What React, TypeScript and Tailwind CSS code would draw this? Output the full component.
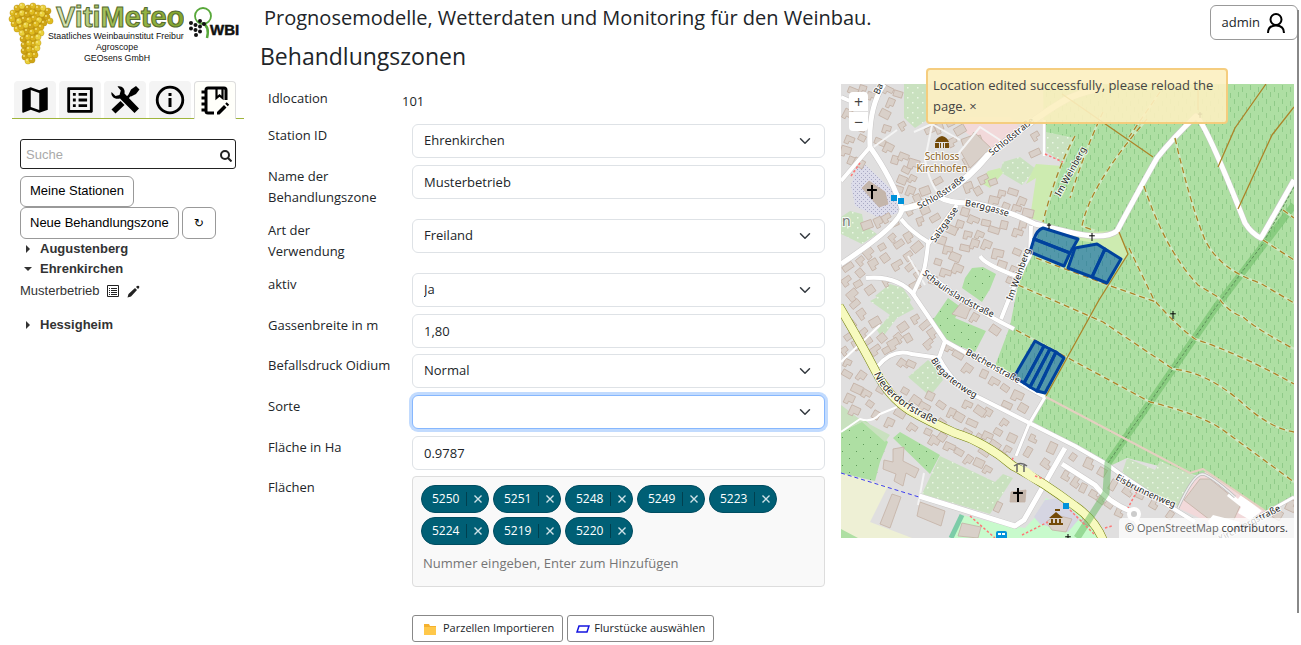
import React, { useState } from 'react';
import { MdMap, MdListAlt } from 'react-icons/md';

type Point = [number, number];

const tabs = ['Karte', 'Liste', 'Werkzeuge', 'Info', 'Behandlungszonen'];

const initialParcels = ['5250', '5251', '5248', '5249', '5223', '5224', '5219', '5220'];

// ---------------------------------------------------------------- icons

const ToolsIcon = () => (
  <svg viewBox="0 0 32 32" className="h-8 w-8">
    <path d="M8.500 2.500 C13 1.500 16.500 5 15.500 9.500 L30 24.500 L25.500 29 L11 14.500 C6 16 1.500 12.500 2.500 8 L6.500 12 L10.500 11 L11.800 6.500 Z" />
    <path d="M19.500 10.500 L22 5.500 L27 2 L30.500 5.500 L27 10 L22 12.500 Z" />
    <path d="M22 10 L17.500 14.500" stroke="#000" strokeWidth="2.500" />
    <path d="M11.500 17 L15.500 21 L6.500 29.500 L2.500 25.500 Z" />
  </svg>
);

const InfoIcon = () => (
  <svg viewBox="0 0 32 32" className="h-8 w-8" fill="none" stroke="#000" strokeWidth="2.800">
    <circle cx="16" cy="16" r="12.800" />
    <path d="M16 14 V23 M16 9 V12" strokeWidth="3" />
  </svg>
);

const NotebookIcon = () => (
  <svg viewBox="0 0 32 32" className="h-8 w-8">
    <g fill="none" stroke="#000" strokeWidth="3">
      <path d="M27 15 V5 Q27 3 25 3 H9 Q7 3 7 5 V26 Q7 28 9 28 H15" />
      <path d="M17.500 3 V13 L20.500 10.500 L23.500 13 V3" strokeWidth="2.200" />
      <path d="M2.500 7 H8 M2.500 13 H8 M2.500 19 H8 M2.500 25 H8" strokeWidth="3.200" />
    </g>
    <path d="M18 27 L25 20 L27.500 22.500 L20.500 29.500 H18 Z M26.200 18.800 L27.700 17.300 L30.200 19.800 L28.700 21.300 Z" />
  </svg>
);

const ListIcon = () => (
  <svg viewBox="0 0 12 12" className="h-3 w-3">
    <path d="M.5 .5 H11.500 V11.500 H.5 Z" fill="#fff" stroke="#222" />
    <path d="M2 3.500 H3 M4 3.500 H10 M2 5.500 H3 M4 5.500 H10 M2 7.500 H3 M4 7.500 H10 M2 9.500 H3 M4 9.500 H10" stroke="#222" />
  </svg>
);

const PencilIcon = () => (
  <svg viewBox="0 0 13 13" className="h-[13px] w-[13px]">
    <path d="M.5 12.500 L1.500 9 L8 3 L10 5 L4 11.500 Z M9 2 L10 1 Q11 .3 12 1 Q12.700 2 12 3 L11 4 Z" fill="#222" />
  </svg>
);

const UserIcon = () => (
  <svg viewBox="0 0 20 22" className="h-[22px] w-5" fill="none" stroke="#000" strokeWidth="2">
    <circle cx="10" cy="7.500" r="5.500" />
    <path d="M2 21 C2 16 5 13.500 10 13.500 C15 13.500 18 16 18 21" />
  </svg>
);

const Triangle = ({ open }: { open: boolean }) => (
  <svg viewBox="0 0 8 8" className="h-2 w-2">
    <path d={open ? 'M0 2 H8 L4 6 Z' : 'M2 0 L6 4 L2 8 Z'} fill="#333" />
  </svg>
);

// ---------------------------------------------------------------- logo

const grapes: Point[] = [
  [13, 13], [17, 8], [22, 6], [28, 8], [33, 6], [38, 8], [43, 8], [48, 11], [12, 19], [17, 15], [22, 13], [27, 14],
  [32, 12], [37, 14], [42, 14], [47, 17], [50, 21], [14, 24], [19, 21], [24, 19], [29, 20], [34, 18], [39, 20], [44, 23],
  [17, 29], [21, 27], [26, 25], [31, 26], [36, 24], [41, 27], [22, 33], [27, 31], [32, 32], [37, 30], [41, 33],
  [23, 39], [28, 37], [33, 38], [38, 37], [24, 45], [29, 43], [34, 44], [38, 43], [24, 51], [29, 49], [34, 50],
  [37, 48], [25, 57], [30, 55], [35, 55], [28, 61], [32, 60],
];

const Logo = () => (
  <svg viewBox="0 0 244 68" className="block h-[68px] w-[244px]">
    <defs>
      <linearGradient id="brand" x1="0" x2="1">
        <stop offset="0" stopColor="#dfe8c4" />
        <stop offset="0.4" stopColor="#a3bf55" />
        <stop offset="1" stopColor="#83a52c" />
      </linearGradient>
      <clipPath id="brandClip">
        <rect x="0" y="0" width="184" height="68" />
      </clipPath>
    </defs>
    <path d="M14 11 L22 6 L42 6 L49 14 L45 24 L39 35 L37 54 L31 62 L25 57 L23 34 L15 24 Z" fill="#c0940f" />
    {grapes.map(([x, y], i) => (
      <g key={i}>
        <circle cx={x} cy={y} r="3.100" fill={['#e0bc1f', '#cfa516', '#ead03a', '#d9b01a'][(i * 7) % 4]} stroke="#b58d12" strokeWidth=".4" />
        <circle cx={x - 1} cy={y - 1} r=".9" fill="#f6e68a" />
      </g>
    ))}
    <g clipPath="url(#brandClip)" fontFamily="Liberation Sans, sans-serif">
      <text x="56" y="27" fontSize="29" fontWeight="700" fill="url(#brand)" stroke="#556b30" strokeWidth="1">VitiMeteo</text>
      <g fontSize="8.800" fill="#111">
        <text x="48" y="39">Staatliches Weinbauinstitut Freiburg</text>
        <text x="117" y="50" textAnchor="middle">Agroscope</text>
        <text x="117" y="61" textAnchor="middle">GEOsens GmbH</text>
      </g>
    </g>
    <g fill="none" stroke="#58a83a">
      <circle cx="203" cy="16" r="8" strokeWidth="1.800" />
      <path d="M202 23 Q210 26 207 38" strokeWidth="2.500" />
    </g>
    <g fill="#111">
      {[[191, 23], [200, 21], [195.500, 25], [191, 28.500], [200, 26.500], [195.500, 30], [204, 24], [200, 31.500], [196, 35]].map(([x, y]) => (
        <circle key={`${x}-${y}`} cx={x} cy={y} r="2" />
      ))}
      <text x="210" y="35" fontSize="15" fontWeight="700" stroke="#111" strokeWidth=".5" fontFamily="Liberation Sans, sans-serif">WBI</text>
    </g>
  </svg>
);

// ---------------------------------------------------------------- map

// houses grouped by the direction of the street they stand on
const houses: { angle: number; spots: Point[] }[] = [
  {
    angle: 22,
    spots: [
      [863, 88], [853, 91], [848, 113], [860, 127], [850, 139], [862, 138], [846, 150], [852, 161], [888, 89], [898, 94],
      [891, 102], [885, 114], [887, 128], [880, 142], [889, 147], [895, 160], [904, 156], [906, 170], [914, 163],
      [902, 180], [913, 178], [898, 189], [911, 190], [859, 163], [872, 95],
    ],
  },
  {
    angle: -25,
    spots: [
      [902, 125], [930, 130], [939, 127], [960, 130], [952, 141], [978, 139], [968, 160], [950, 122], [967, 140],
      [938, 181], [917, 198], [925, 191], [1035, 135], [1035, 153], [968, 186], [978, 191], [983, 178], [993, 182],
      [910, 208], [925, 210], [920, 220], [935, 218], [878, 221], [867, 225], [886, 217], [895, 223],
    ],
  },
  {
    angle: 18,
    spots: [
      [1002, 193], [1013, 192], [1022, 201], [1028, 213], [1017, 208], [1006, 206], [994, 200], [965, 212], [974, 219],
      [986, 223], [960, 224], [952, 230], [968, 234], [994, 230], [987, 244], [1004, 225], [1018, 232], [1017, 252],
      [998, 253], [1002, 265], [1014, 269], [965, 248], [975, 243], [955, 257], [948, 249], [938, 262], [958, 268],
      [933, 280], [946, 272], [1011, 281], [1023, 224], [941, 240], [980, 234],
    ],
  },
  {
    angle: -35,
    spots: [
      [892, 237], [899, 244], [908, 236], [917, 247], [908, 255], [882, 247], [868, 252], [885, 258], [897, 264],
      [910, 267], [918, 275], [915, 286], [860, 260], [848, 267], [873, 263], [860, 273], [846, 280], [858, 284],
      [852, 294], [870, 290], [886, 281], [855, 304], [861, 313], [875, 322], [863, 332], [848, 337], [857, 343],
      [882, 338], [875, 349], [887, 350], [898, 337], [903, 327], [915, 318], [925, 325], [932, 332], [908, 338],
      [928, 343], [868, 341], [893, 343], [851, 325], [844, 350],
    ],
  },
  {
    angle: 30,
    spots: [
      [848, 362], [847, 374], [862, 375], [857, 389], [867, 393], [870, 404], [855, 410], [881, 389], [904, 363],
      [911, 364], [975, 317], [995, 330], [950, 347], [958, 355], [968, 368], [984, 374], [995, 381], [1005, 388],
      [1018, 395], [1023, 408], [1005, 422], [1007, 405], [988, 412], [980, 411], [968, 404], [905, 391], [916, 400],
      [930, 396], [925, 406], [941, 405], [952, 412], [959, 417], [942, 422], [972, 423], [967, 433], [979, 438],
      [988, 435], [998, 432], [995, 445], [1012, 438], [1008, 449], [1002, 455], [890, 422], [900, 413], [913, 427],
      [928, 432], [935, 440], [942, 437], [950, 446], [959, 452], [969, 459], [979, 463], [988, 469], [984, 452],
      [850, 398], [876, 415], [973, 306], [960, 312],
    ],
  },
  {
    angle: -60,
    spots: [
      [1032, 438], [1028, 452], [1045, 463], [1052, 448], [1065, 475], [1073, 457], [1088, 463], [1102, 472],
      [1075, 481], [1083, 488], [1093, 494], [1110, 503], [1118, 512], [1113, 485], [1127, 490], [1140, 495],
      [1153, 503], [1170, 515], [1290, 505], [1278, 515], [1100, 499], [998, 507], [1086, 520],
    ],
  },
];

const roads: { d: string; w: number }[] = [
  { d: 'M884 84 Q868 108 870 147 Q893 180 902 209 Q901 224 841 264', w: 5 },
  { d: 'M841 181 L870 147 M841 97 L850 101', w: 4 },
  { d: 'M902 209 Q950 201 988 155 Q1035 118 1060 103 Q1075 93 1103 88', w: 6 },
  { d: 'M937 196 Q950 204 974 203 Q1010 211 1035 224 L1073 233 Q1105 240 1117 231 Q1141 186 1157 158 Q1172 139 1196 116 Q1206 124 1245 223 Q1252 234 1261 238 L1294 180', w: 5 },
  { d: 'M957 205 L928 244 Q926 262 924 270 Q960 302 1014 329', w: 4 },
  { d: 'M901 219 Q910 231 928 242 M924 270 L913 294 L945 341 L1045 397', w: 4 },
  { d: 'M866 278 Q898 275 915 296 M980 256 Q984 264 1016 276 M1031 226 L1030 255 Q1014 284 1001 319', w: 4 },
  { d: 'M878 366 Q893 348 912 354 L939 358 L945 341 M939 358 Q955 388 980 398 L1075 446 L1108 465 Q1130 482 1195 522', w: 4 },
  { d: 'M1045 397 L1029 424 L1016 456', w: 3 },
  { d: 'M919 496 L1015 526 L1024 520 L1065 448 M1062 464 L1095 485 Q1108 502 1130 511 L1144 532', w: 5 },
  { d: 'M1294 497 Q1255 519 1230 533 M1044 120 V156', w: 3 },
];

const footways = [
  'M1075 136 Q1056 170 1043 222 M1103 112 Q1085 150 1070 198',
  'M1147 119 Q1090 185 1082 226 L1095 231 M1160 92 L1129 137',
  'M1175 138 Q1190 203 1205 240 Q1220 270 1260 283 L1294 303',
  'M1144 186 Q1165 250 1198 285 L1218 297 Q1228 312 1243 317 Q1258 330 1294 349',
  'M1129 248 L1154 300 Q1178 327 1195 339 Q1240 354 1294 384',
  'M1018 285 L1103 322 L1173 369 Q1206 372 1240 401 Q1269 428 1294 432',
  'M1036 258 L1108 285 L1156 302',
  'M1016 330 L1150 402 Q1200 414 1223 430 L1294 482',
  'M1263 240 L1294 260 M1283 210 L1294 218',
];

const labels: { id: string; d: string; text: string; size: number }[] = [
  { id: 'l1', d: 'M919 209 Q948 196 970 175', text: 'Schloßstraße', size: 9 },
  { id: 'l2', d: 'M992 156 Q1010 142 1040 117', text: 'Schloßstraße', size: 9 },
  { id: 'l3', d: 'M965 206 Q985 208 1020 221', text: 'Berggasse', size: 9 },
  { id: 'l4', d: 'M935 243 L966 199', text: 'Salzgasse', size: 9 },
  { id: 'l5', d: 'M922 274 Q955 303 1004 322', text: 'Schauinslandstraße', size: 9 },
  { id: 'l6', d: 'M1060 197 L1092 139', text: 'Im Weinberg', size: 9 },
  { id: 'l7', d: 'M1012 301 Q1022 275 1034 239', text: 'Im Weinberg', size: 9 },
  { id: 'l8', d: 'M965 354 L1030 390', text: 'Belchenstraße', size: 9 },
  { id: 'l9', d: 'M931 360 Q942 382 984 403', text: 'Biegartenweg', size: 9 },
  { id: 'l10', d: 'M874 374 Q888 408 960 434', text: 'Niederdorfstraße', size: 10 },
  { id: 'l11', d: 'M1115 479 Q1145 498 1190 513', text: 'Eisbrunnenweg', size: 9 },
  { id: 'l12', d: 'M1221 542 Q1250 525 1298 502', text: 'Kirchbergstraße', size: 9 },
  { id: 'l13', d: 'M879 95 L890 70', text: 'Bachstraße', size: 9 },
];

const parcelShapes = [
  'M1043 228 L1078 239 L1070 253 L1034 239 Q1037 230 1043 228 Z',
  'M1034 239 L1070 253 L1064 266 L1030 252 Z',
  'M1075 248 L1097 244 L1105 249 L1092 277 L1068 268 Z',
  'M1105 249 L1121 259 L1107 283 L1092 277 Z',
  'M1035 341 L1044 346 L1024 383 L1014 377 Z',
  'M1044 346 L1050 349 L1030 387 L1024 383 Z',
  'M1050 349 L1056 352 L1037 391 L1030 387 Z',
  'M1056 352 L1064 358 L1045 393 L1037 391 Z',
];

const crosses: { x: number; y: number; s: number }[] = [
  { x: 872, y: 192, s: 7 },
  { x: 1018, y: 495, s: 7 },
  { x: 1049, y: 226, s: 3 },
  { x: 1092, y: 237, s: 4 },
  { x: 1173, y: 315, s: 4 },
  { x: 1200, y: 115, s: 3 },
  { x: 1068, y: 538, s: 4 },
];

const MapView = () => (
  <svg viewBox="841 84 453 454" className="block w-full bg-[#e0dfdf]" role="img" aria-label="Karte der Flächen">
    <defs>
      <pattern id="vines" width="16" height="14" patternUnits="userSpaceOnUse">
        <rect width="16" height="14" fill="#aedfa3" />
        <path d="M2.500 1 V6 M10.500 3 V8 M6.500 8 V13 M14.500 9 V14" stroke="#8fca88" />
      </pattern>
      <pattern id="orchard" width="10" height="10" patternUnits="userSpaceOnUse">
        <rect width="10" height="10" fill="#c9e1bf" />
        <path d="M2 2 h1.500 v1.500 h-1.500 Z M7 7 h1.500 v1.500 h-1.500 Z" fill="#ecf7e6" />
      </pattern>
      <pattern id="grass" width="14" height="14" patternUnits="userSpaceOnUse">
        <rect width="14" height="14" fill="#aedfa3" />
        <path d="M2 3 h1 v1 h-1 Z M9 10 h1 v1 h-1 Z" fill="#5f9a5a" />
      </pattern>
      <pattern id="yard" width="4" height="4" patternUnits="userSpaceOnUse">
        <rect width="4" height="4" fill="#dcdcea" />
        <path d="M1 1 h1 v1 h-1 Z M3 3 h1 v1 h-1 Z" fill="#a9a9c4" />
      </pattern>
      {labels.map((l) => (
        <path key={l.id} id={l.id} d={l.d} />
      ))}
    </defs>

    <rect x="841" y="84" width="453" height="454" fill="#e0dfdf" />

    {/* land use */}
    <path d="M1043 84 H1294 V497 L1266 511 L1210 475 L1195 475 L1127 458 L1110 466 L1033 422 L1045 397 L995 366 L1010 326 L1018 285 L1032 250 L1043 222 L1062 165 L1044 140 Z" fill="url(#vines)" />
    <path d="M904 84 H928 L930 118 L915 128 L904 118 Z" fill="url(#orchard)" />
    <path d="M1046 132 L1075 138 L1064 164 L1044 150 Z M1003 162 L1020 157 L1036 169 L1022 185 L1000 172 Z" fill="url(#orchard)" />
    <path d="M1036 164 L1062 166 L1043 222 L1030 218 L1036 178 L1026 184 Z M988 171 L1000 168 L1003 173 L990 188 L979 182 Z" fill="#cdebb0" />
    <path d="M1080 232 L1118 231 L1128 253 L1122 262 L1100 244 L1078 240 Z" fill="#cdebb0" />
    <path d="M960 128 L968 117 L1010 117 L1020 128 L985 158 L968 148 L972 137 Z" fill="#f2d9da" />
    <path d="M857 168 L862 162 L900 197 L898 213 L880 218 L855 206 L851 185 Z" fill="url(#yard)" />
    <path d="M841 217 L850 211 L862 214 L864 225 L877 234 L862 244 L841 234 Z" fill="url(#orchard)" />
    <path d="M965 278 L972 268 L983 267 L996 274 L990 289 L982 302 L962 288 Z" fill="url(#grass)" />
    <path d="M935 317 L948 298 L962 308 L955 318 L986 331 L975 352 L948 342 L930 322 Z" fill="url(#grass)" />
    <path d="M870 301 L885 293 L905 295 L914 309 L897 318 L882 338 L877 330 L890 315 Z" fill="url(#orchard)" />
    <path d="M875 296 L890 284 L903 288 L911 300 L905 310 Z" fill="url(#orchard)" />
    <path d="M908 377 L928 360 L938 368 L943 380 L930 396 Z" fill="url(#orchard)" />
    <path d="M841 432 L865 420 L888 442 L880 462 L875 481 L841 473 Z M893 438 L900 432 L940 455 L930 474 Z" fill="url(#grass)" />
    <path d="M841 405 L858 418 L890 435 L885 442 L862 422 L841 432 Z" fill="#c9e1bf" />
    <path d="M940 456 L995 482 L1003 474 L1013 478 L990 514 L922 494 Z" fill="url(#orchard)" />
    <path d="M841 473 L888 486 L870 522 L912 538 H841 Z" fill="#eef0d5" />
    <path d="M841 529 L858 538 H841 Z" fill="#aedfa3" />
    <path d="M1127 458 L1155 470 L1160 461 L1195 476 L1178 506 L1121 476 Z" fill="url(#orchard)" />
    <path d="M1178 508 L1196 476 L1206 472 L1266 511 L1225 530 Z" fill="#f2d9da" />
    <path d="M962 515 L1000 524 L1025 528 L1038 514 L1046 498 L1072 508 L1106 538 H952 Z" fill="#c8facc" />
    <path d="M1045 500 L1060 498 L1080 518 L1068 532 L1040 524 L1034 517 Z" fill="#d5d5e2" />
    <path d="M962 515 L951 538" stroke="#7ccca8" strokeWidth="5" />

    {/* houses */}
    <g fill="#d9d0c9" stroke="#c4b1a5" strokeWidth=".8">
      {houses.map((group) =>
        group.spots.map(([x, y], i) => {
          const w = 7 + ((i * 3) % 5);
          const h = 5 + ((i * 5) % 4);
          const turn = group.angle + ((i * 7) % 3) * 5 - 5;
          return (
            <path
              key={`${x}-${y}`}
              transform={`translate(${x} ${y}) rotate(${turn})`}
              d={i % 2 ? `M${-w / 2} ${-h / 2} h${w} v${h} h${-w} Z` : `M${-w / 2} ${-h / 2} h${w} v${h} h${-w / 2} v3 h${-w / 2} Z`}
            />
          );
        })
      )}
      <path d="M961 152 L974 132 L991 148 L970 168 Z M961 303 L971 307 L966 319 L952 314 Z" />
      <path d="M862 188 L869 181 L885 192 L888 204 L879 207 Z" fill="#c4b6ab" />
      <path d="M893 449 L904 447 L903 461 L919 469 L915 478 L906 473 L903 486 L894 481 L896 474 L883 469 L884 460 L893 462 Z" />
      <path d="M892 494 L901 497 L890 528 L880 524 Z M920 502 L945 511 L941 526 L917 516 Z" />
      <path d="M1011 492 L1026 490 L1025 502 L1010 502 Z" fill="#c4b6ab" />
      <path d="M1184 500 L1200 479 L1210 479 L1241 504 L1230 528 L1210 520 Z M962 523 L981 527 L978 538 L958 536 Z" />
      <path d="M1046 522 L1056 515 L1072 519 L1066 532 L1052 530 Z" />
    </g>
    <path d="M1227 496 L1230 492 L1238 499 L1241 495 L1262 511 L1250 520 L1238 513 L1241 507 Z M1208 521 L1213 515 L1240 522 L1232 532 L1210 527 Z" fill="#fff" />

    {/* roads */}
    <g fill="none" strokeLinejoin="round">
      <path d="M914 132 L932 124 L960 140 M932 125 L925 160 Q930 185 940 195 M955 158 L980 127 L1000 140 M918 505 L924 473 M868 151 L897 130 M908 256 L925 285" stroke="#f4f4f4" strokeWidth="2" />
      {roads.map((r) => (
        <path key={`c${r.d}`} d={r.d} stroke="#c8c6c6" strokeWidth={r.w + 1} />
      ))}
      {roads.map((r) => (
        <path key={r.d} d={r.d} stroke="#fff" strokeWidth={r.w} />
      ))}
      <path d="M841 432 L860 419 Q872 423 880 414 L897 407 M841 362 L880 325" stroke="#fff" strokeWidth="2" />
      <path d="M839 306 Q862 345 876 372 Q889 397 909 410 Q930 422 955 433 Q985 442 1013 466 Q1040 480 1075 506 Q1095 520 1103 540" stroke="#707d05" strokeWidth="9" />
      <path d="M839 306 Q862 345 876 372 Q889 397 909 410 Q930 422 955 433 Q985 442 1013 466 Q1040 480 1075 506 Q1095 520 1103 540" stroke="#f7fabf" strokeWidth="8" />
      <path d="M1008 462 Q1022 479 1043 487 L1054 488 L1028 468 Z" fill="#f7fabf" />
      <circle cx="1134" cy="514" r="5" fill="#ccc" stroke="#fff" strokeWidth="4" />
      <path d="M1294 205 L1216 307 L1108 463 L1106 493 L1077 538" stroke="#64b95e" strokeOpacity=".5" strokeWidth="7" />
      <path d="M1294 187 L1262 245 L1216 307 L1108 463" stroke="#5e8f5a" strokeDasharray="3 2" />
      {footways.map((d) => (
        <g key={d}>
          <path d={d} stroke="#cdeac2" strokeWidth="2.500" />
          <path d={d} stroke="#ac8327" strokeWidth="1.300" strokeDasharray="6 4" />
        </g>
      ))}
      <path d="M1266 84 L1235 128 L1218 167 M1294 107 L1272 135 L1238 209 M1062 94 L1153 157 M1119 232 L1128 254 L1099 300 L1046 396 M1198 84 V110" stroke="#ac8327" strokeWidth="1.300" />
      <path d="M1046 397 L1190 473 L1203 469 L1264 510" stroke="#e4cfc0" strokeWidth="2" />
      <path d="M1178 508 Q1193 475 1202 474 Q1209 474 1235 497" stroke="#bbb" strokeWidth="3" />
      <path d="M1178 508 Q1193 475 1202 474 Q1209 474 1235 497" stroke="#eee" strokeWidth="1.500" />
      <path d="M841 473 L919 497" stroke="#3c3cf0" strokeDasharray="4 3" />
      <path d="M1045 154 L1063 162 M851 176 L860 163 M1137 491 L1128 508 M970 516 L995 538 M1070 510 L1095 535 M1022 535 L1048 522 M1012 460 L1014 456 M1035 476 L1044 479 M1105 528 L1112 526" stroke="#f77" strokeWidth="1.500" strokeDasharray="2.500 2" />
    </g>

    {/* selected parcels */}
    <g fill="#0a5cb0" fillOpacity=".55" stroke="#00429d" strokeWidth="3" strokeLinejoin="round">
      {parcelShapes.map((d) => (
        <path key={d} d={d} />
      ))}
    </g>

    {/* points of interest */}
    {crosses.map((c) => (
      <path
        key={`${c.x}-${c.y}`}
        d={`M${c.x} ${c.y - c.s} V${c.y + c.s} M${c.x - c.s * 0.7} ${c.y - c.s * 0.3} H${c.x + c.s * 0.7}`}
        stroke="#000"
        strokeWidth={c.s > 5 ? 2 : 1}
      />
    ))}
    <path d="M891 195 h6 v6 h-6 Z M898 198 h6 v6 h-6 Z M1063 503 h6 v6 h-6 Z" fill="#0092da" />
    <path d="M996 533 q0 -2 2 -2 h7 q2 0 2 2 v5 h-11 Z" fill="#0092da" />
    <path d="M998 533 h3 v2 h-3 Z M1002 533 h3 v2 h-3 Z" fill="#fff" />
    <path d="M935 142 Q937 137 942 136 Q947 137 949 142 Z M935 143 h4 v5 h-4 Z M940 143 h1 v5 h-1 Z M943 143 h1 v5 h-1 Z M945 143 h4 v5 h-4 Z" fill="#734a08" />
    <path d="M1049 518 L1056 512 L1063 518 Z M1051 519 h2 v4 h-2 Z M1055 519 h2 v4 h-2 Z M1059 519 h2 v4 h-2 Z M1049 523 h14 v2 h-14 Z M1055 509 h5 v2 h-5 Z" fill="#734a08" />
    <path d="M1014 466 Q1021 461 1027 466 M1017 465 V472 M1024 465 V472" fill="none" stroke="#666" strokeWidth="1.500" />

    {/* names */}
    <g fontFamily="Noto Sans, sans-serif" fill="#222" stroke="#fff" strokeOpacity=".8" strokeWidth="2" paintOrder="stroke">
      {labels.map((l) => (
        <text key={l.id} fontSize={l.size}>
          <textPath href={`#${l.id}`}>{l.text}</textPath>
        </text>
      ))}
      <g fill="#8b6428" textAnchor="middle" fontSize="10">
        <text x="942" y="160">Schloss</text>
        <text x="942" y="172">Kirchhofen</text>
      </g>
      <text x="842" y="226" fontSize="14" fill="#777">n</text>
    </g>
  </svg>
);

// ---------------------------------------------------------------- form

interface RowProps {
  id: string;
  label: string;
  children: React.ReactNode;
}

const Row = ({ id, label, children }: RowProps) => (
  <div className="flex">
    <label htmlFor={id} className="w-38 shrink-0 pt-px pr-3 pb-[11px] pl-2 leading-[21px] whitespace-pre-line">
      {label}
    </label>
    <div className="min-w-0 flex-1">{children}</div>
  </div>
);

const SelectRow = ({ id, label, value, active }: { id: string; label: string; value: string; active?: boolean }) => (
  <Row id={id} label={label}>
    <div className="relative mb-[7px]">
      <select
        id={id}
        defaultValue={value}
        className={
          active
            ? 'block h-[34px] w-full appearance-none rounded-md border border-[#86b7fe] bg-white px-[11px] ring-3 ring-[#c2dbfe] outline-none'
            : 'block h-[34px] w-full appearance-none rounded-md border border-[#dee2e6] bg-white px-[11px]'
        }
      >
        <option value={value}>{value}</option>
      </select>
      <svg viewBox="0 0 16 16" className="pointer-events-none absolute top-[11px] right-3 h-3 w-4">
        <path d="M2 5 L8 11 L14 5" fill="none" stroke="#343a40" strokeWidth="2" strokeLinecap="round" strokeLinejoin="round" />
      </svg>
    </div>
  </Row>
);

const InputRow = ({ id, label, value }: { id: string; label: string; value: string }) => (
  <Row id={id} label={label}>
    <input
      id={id}
      type="text"
      defaultValue={value}
      className="mb-[6px] block h-[34px] w-full rounded-md border border-[#dee2e6] bg-white px-[11px]"
    />
  </Row>
);

const Sidebar = () => (
  <aside className="w-65 shrink-0 font-['Liberation_Sans',sans-serif] text-[13px] text-[#333]">
    <Logo />
    <nav className="mt-[13px] ml-3 flex w-58 items-end">
      <div className="flex flex-1 gap-[3px] border-b border-[#9fb53c] pl-[2px]">
        {tabs.map((tab, i) => (
          <button
            key={tab}
            type="button"
            aria-label={tab}
            className={
              i === 4
                ? '-mb-px flex h-[38px] w-[42px] items-center justify-center rounded-t border border-b-0 border-[#ddd] bg-[#fffffa] text-black'
                : 'flex h-[37px] w-[42px] items-center justify-center rounded-t bg-[#f4f4f4] text-black'
            }
          >
            {i === 0 && <MdMap size={34} />}
            {i === 1 && <MdListAlt size={34} />}
            {i === 2 && <ToolsIcon />}
            {i === 3 && <InfoIcon />}
            {i === 4 && <NotebookIcon />}
          </button>
        ))}
      </div>
    </nav>

    <div className="mt-5 ml-5 w-54">
      <div className="relative">
        <input
          type="search"
          aria-label="Suche"
          placeholder="Suche"
          className="block h-[30px] w-full rounded-[3px] border border-[#222] px-[5px] placeholder:text-[#aaa]"
        />
        <svg viewBox="0 0 12 12" className="absolute top-[11px] right-1 h-3 w-3" fill="none" stroke="#222" strokeWidth="2">
          <circle cx="5" cy="5" r="4" />
          <path d="M8 8 L11.500 11.500" />
        </svg>
      </div>
      <div className="mt-[7px] text-black">
        <button type="button" className="block h-[31px] rounded-md border border-[#999] px-[9px] pb-[2px]">Meine Stationen</button>
        <div className="flex gap-[3px]">
          <button type="button" className="h-8 rounded-md border border-[#999] px-[9px]">Neue Behandlungszone</button>
          <button type="button" aria-label="Neu laden" className="h-8 w-[34px] rounded-md border border-[#999] font-['DejaVu_Sans',sans-serif] text-xs">↻</button>
        </div>
      </div>
      <ul className="leading-5">
        <li className="flex items-center gap-2 pl-1 font-bold"><Triangle open={false} />Augustenberg</li>
        <li>
          <div className="flex items-center gap-2 pl-1 font-bold"><Triangle open />Ehrenkirchen</div>
          <div className="mt-[2px] mb-[14px] flex items-center">
            Musterbetrieb
            <button type="button" aria-label="Details" className="ml-2"><ListIcon /></button>
            <button type="button" aria-label="Bearbeiten" className="ml-2"><PencilIcon /></button>
          </div>
        </li>
        <li className="flex items-center gap-2 pl-1 font-bold"><Triangle open={false} />Hessigheim</li>
      </ul>
    </div>
  </aside>
);

export default function App() {
  const [parcels, setParcels] = useState(initialParcels);
  const [toast, setToast] = useState(true);

  return (
    <div className="relative flex bg-white font-['Open_Sans','Noto_Sans',sans-serif] text-[13px] text-[#212529]">
      <Sidebar />
      <main className="min-w-0 flex-1 pr-[7px]">
        <header className="flex h-10 items-start justify-between">
          <p className="pt-1 pl-1 text-xl leading-7">Prognosemodelle, Wetterdaten und Monitoring für den Weinbau.</p>
          <button type="button" className="mt-[5px] -mr-1 flex h-[35px] items-center gap-[6px] rounded-md border border-[#999] bg-white px-[11px]">
            admin
            <UserIcon />
          </button>
        </header>
        <h1 className="text-[23px] leading-8">Behandlungszonen</h1>

        <div className="mt-3 grid grid-cols-[565fr_453fr] items-start gap-4">
          <form>
            <div className="flex h-10 pt-1">
              <span className="w-[142px] pl-2 leading-[21px]">Idlocation</span>
              <span className="leading-[26px]">101</span>
            </div>
            <SelectRow id="station" label="Station ID" value="Ehrenkirchen" />
            <InputRow id="name" label={'Name der\nBehandlungszone'} value="Musterbetrieb" />
            <SelectRow id="art" label={'Art der\nVerwendung'} value="Freiland" />
            <SelectRow id="aktiv" label="aktiv" value="Ja" />
            <InputRow id="gasse" label="Gassenbreite in m" value="1,80" />
            <SelectRow id="oidium" label="Befallsdruck Oidium" value="Normal" />
            <SelectRow id="sorte" label="Sorte" value="" active />
            <InputRow id="ha" label="Fläche in Ha" value="0.9787" />
            <Row id="flaechen" label="Flächen">
              <div className="rounded-sm border border-[#ddd] bg-[#f9f9f9] px-2 pt-2 pb-[9px]">
                <ul className="flex flex-wrap gap-1">
                  {parcels.map((p) => (
                    <li key={p} className="flex h-7 w-17 items-center rounded-full border border-[#004d61] bg-[#005f75] pl-[10px] text-xs text-white">
                      <span className="flex-1">{p}</span>
                      <button
                        type="button"
                        aria-label={`${p} entfernen`}
                        onClick={() => setParcels(parcels.filter((x) => x !== p))}
                        className="flex h-[14px] w-[22px] items-center justify-center border-l border-[#00404f]"
                      >
                        <svg viewBox="0 0 8 8" className="h-2 w-2">
                          <path d="M.5 .5 L7.500 7.500 M7.500 .5 L.5 7.500" stroke="#cfe3e8" strokeWidth="1.400" />
                        </svg>
                      </button>
                    </li>
                  ))}
                </ul>
                <input
                  id="flaechen"
                  type="text"
                  placeholder="Nummer eingeben, Enter zum Hinzufügen"
                  className="mt-[3px] block h-[29px] w-full bg-transparent px-[2px] placeholder:text-[#757575]"
                />
              </div>
            </Row>
            <div className="mt-7 flex gap-1 pl-38 text-[11px]">
              <button type="button" className="flex h-[27px] items-center gap-1 rounded-[3px] border border-[#888] px-2 whitespace-nowrap">
                <svg viewBox="0 0 18 14" className="h-[14px] w-[18px]">
                  <path d="M3 2 H8 L9 4 H15 V12 H3 Z" fill="#f5b12e" />
                  <path d="M3 5 H15 V13 H3 Z" fill="#ffc84a" />
                </svg>
                Parzellen Importieren
              </button>
              <button type="button" className="flex h-[27px] items-center gap-1 rounded-[3px] border border-[#888] px-2 whitespace-nowrap">
                <svg viewBox="0 0 14 8" className="h-2 w-[14px]">
                  <path d="M3 1 H13 L11 7 H1 Z" fill="#fff" stroke="#1414e0" strokeWidth="1.500" />
                </svg>
                Flurstücke auswählen
              </button>
            </div>
          </form>

          <div className="relative">
            <MapView />
            <div className="absolute top-2 left-2 flex w-[19px] flex-col gap-px text-base text-[#444]">
              <button type="button" aria-label="Vergrößern" className="h-[19px] rounded-t-sm bg-white leading-[18px]">+</button>
              <button type="button" aria-label="Verkleinern" className="h-[19px] rounded-b-sm bg-white leading-[18px]">−</button>
            </div>
            <p className="absolute right-0 bottom-0 rounded-tl bg-white/75 px-[6px] text-[11px] leading-5 text-[#333]">
              © <a href="#osm" className="text-[#666]">OpenStreetMap</a> contributors.
            </p>
            {toast && (
              <div role="status" className="absolute -top-4 left-[85px] w-[302px] rounded-sm border-2 border-[#f2c46d]/80 bg-[#fcefc0]/90 px-[5px] py-[5px] leading-[21px] text-[#444]">
                Location edited successfully, please reload the page.{' '}
                <button type="button" aria-label="Schließen" onClick={() => setToast(false)}>×</button>
              </div>
            )}
          </div>
        </div>
      </main>
      <div className="absolute top-[10px] right-[2px] h-[603px] w-[2px] bg-[#888]" />
    </div>
  );
}
